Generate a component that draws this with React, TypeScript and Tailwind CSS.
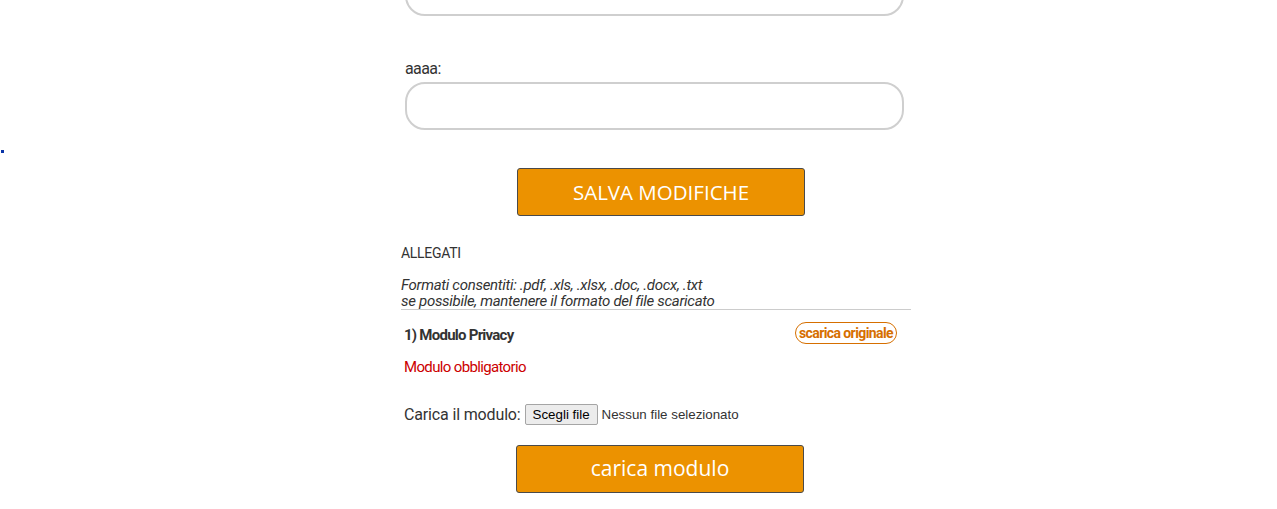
import React from "react";

export default function App() {
  return (
    <div className="relative min-h-[509px] w-full overflow-hidden bg-white font-['Roboto',sans-serif] text-[#333]">
      <div className="absolute left-[1px] top-[150px] h-[3px] w-[3px] bg-[#0a35a8]" />
      <div className="ml-[401px] flex w-[510px] flex-col">
        <div className="ml-[4px] mt-[-32px] flex h-[48px] w-[499px] items-center rounded-[20px] border-2 border-[#cfcfcf] pl-[34px] text-[16px] text-[#222]">
          <span className="tracking-[-0.5px]">ap&nbsp;&nbsp;&nbsp;&nbsp;&nbsp;&nbsp;&nbsp;p</span>
        </div>
        <div className="ml-[4px] mt-[43px] text-[16px] leading-[19px] tracking-[-0.6px]">aaaa:</div>
        <div className="ml-[4px] mt-[4px] h-[48px] w-[499px] rounded-[20px] border-2 border-[#cfcfcf]" />
        <div className="mt-[38px] flex">
          <button className="ml-[116px] flex h-[48px] w-[288px] items-center justify-center rounded-[3px] border border-[#4a4a4a] bg-[#ec9200] font-['Open_Sans',sans-serif] text-[20.5px] text-white">
            SALVA MODIFICHE
          </button>
        </div>
        <div className="mt-[28px] text-[14px] leading-[19px] tracking-[-0.3px] text-[#333]">ALLEGATI</div>
        <div className="mt-[14px] text-[15px] italic leading-[16px] tracking-[-0.3px] text-[#333]">
          <div>Formati consentiti: .pdf, .xls, .xlsx, .doc, .docx, .txt</div>
          <div>se possibile, mantenere il formato del file scaricato</div>
        </div>
        <div className="h-px w-[510px] bg-[#cccccc]" />
        <div className="mt-[12px] flex items-start justify-between">
          <div className="ml-[3px] mt-[4px] text-[15px] font-bold leading-[19px] tracking-[-0.75px] text-[#333]">1) Modulo Privacy</div>
          <div className="mr-[14px] flex h-[22px] w-[102px] items-center justify-center rounded-[11px] border border-[#d66f00] text-[14px] font-bold tracking-[-0.6px] text-[#d66f00]">
            scarica originale
          </div>
        </div>
        <div className="ml-[3px] mt-[13px] text-[15px] leading-[19px] tracking-[-0.65px] text-[#cc0000]">Modulo obbligatorio</div>
        <div className="ml-[3px] mt-[27px] flex h-[21px] items-center">
          <span className="text-[16px] tracking-[-0.15px] text-[#333]">Carica il modulo:</span>
          <span className="ml-[4px] flex h-[21px] w-[73px] items-center justify-center rounded-[2px] border border-[#a5a5a5] bg-[#ececec] font-['Liberation_Sans',sans-serif] text-[13.33px] text-black">
            Scegli file
          </span>
          <span className="ml-[4px] font-['Liberation_Sans',sans-serif] text-[13.33px] text-[#333]">Nessun file selezionato</span>
        </div>
        <div className="mt-[20px] flex">
          <button className="ml-[115px] flex h-[48px] w-[288px] items-center justify-center rounded-[3px] border border-[#4a4a4a] bg-[#ec9200] font-['Open_Sans',sans-serif] text-[21px] text-white">
            carica modulo
          </button>
        </div>
      </div>
    </div>
  );
}
